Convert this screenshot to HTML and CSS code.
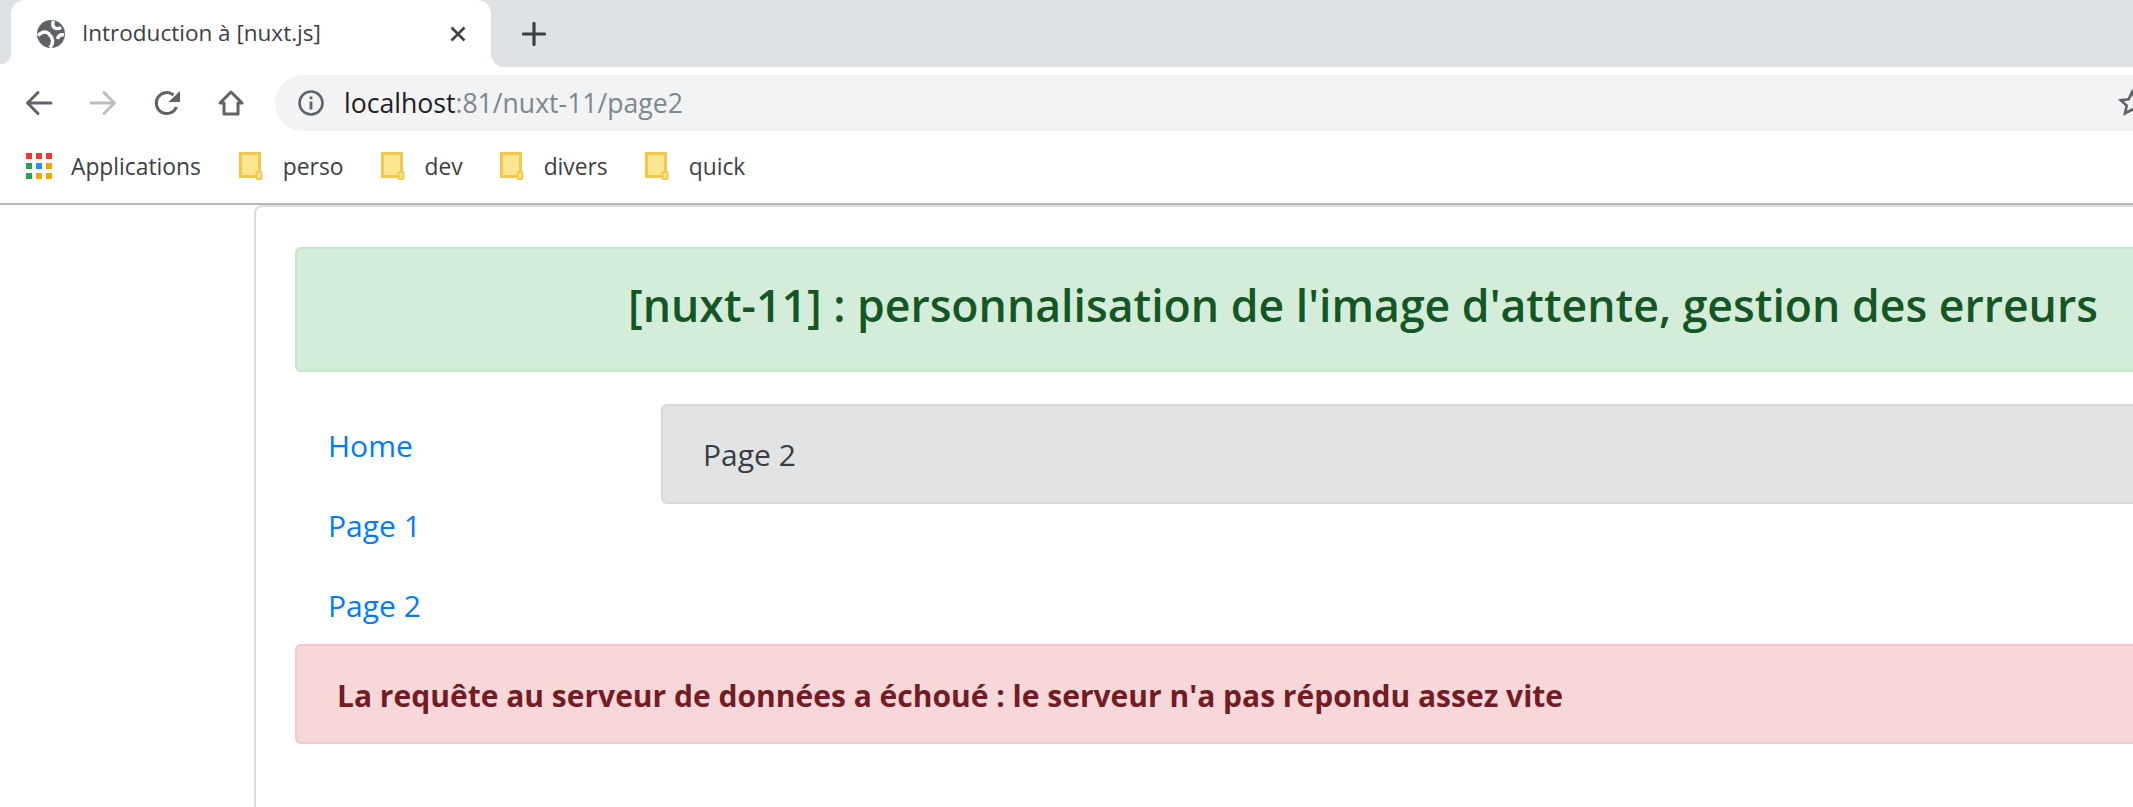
FILE: index.html
```html
<!DOCTYPE html>
<html lang="fr">
<head>
<meta charset="utf-8">
<title>Introduction à [nuxt.js]</title>
<link rel="stylesheet" href="styles.css">
</head>
<body>
<header class="chrome">
  <div class="tabstrip">
    <div class="tab">
      <svg class="favicon" viewBox="0 0 28 28"><circle cx="14" cy="14" r="14" fill="#5f6368"/><path d="M1 15.500Q7 9.500 11.500 13.500Q15 17 15.500 20Q16 24 13 27.500M16.500 1Q14.500 6 18 8Q21 9.500 24 7.500M27 15Q22 14 20.500 19" stroke="#fff" stroke-width="3.400" fill="none"/></svg>
      <span class="tab-title">Introduction à [nuxt.js]</span>
      <svg class="tab-close" viewBox="0 0 16 16"><path d="M1.500 1.500l13 13M14.500 1.500l-13 13" stroke="#3c4043" stroke-width="2.600" fill="none"/></svg>
    </div>
    <svg class="new-tab" viewBox="0 0 24 24"><path d="M12 1.500v21M1.500 12h21" stroke="#3c4043" stroke-width="3.200" fill="none" stroke-linecap="round"/></svg>
  </div>
  <div class="toolbar">
    <svg class="nav-icon" viewBox="0 0 28 28"><path d="M26 14H3M13 3.500L2.500 14 13 24.500" stroke="#5f6368" stroke-width="3" fill="none" stroke-linecap="round" stroke-linejoin="round"/></svg>
    <svg class="nav-icon" viewBox="0 0 28 28"><path d="M2 14h23M15 3.500L25.500 14 15 24.500" stroke="#bdbdbd" stroke-width="3" fill="none" stroke-linecap="round" stroke-linejoin="round"/></svg>
    <svg class="nav-icon" viewBox="0 0 28 28"><path d="M23.500 18A10.500 10.500 0 1 1 20.500 6" stroke="#5f6368" stroke-width="3" fill="none"/><path d="M27 2v11H15.500z" fill="#5f6368"/></svg>
    <svg class="nav-icon" viewBox="0 0 28 28"><path d="M14 3L3 14h4v11h14V14h4z" stroke="#5f6368" stroke-width="3" fill="none" stroke-linejoin="round"/></svg>
    <div class="omnibox">
      <svg class="info" viewBox="0 0 28 28"><circle cx="14" cy="14" r="11.500" stroke="#5f6368" stroke-width="2.600" fill="none"/><path d="M12.600 12.500h2.800v8h-2.800zM12.600 7.500h2.800v2.800h-2.800z" fill="#5f6368"/></svg>
      <span class="url"><span class="url-host">localhost</span>:81/nuxt-11/page2</span>
      <svg class="star" viewBox="0 0 28 28"><path d="M14 3l3.300 7.400 8 .8-6 5.400 1.700 7.900-7-4-7 4 1.700-7.900-6-5.400 8-.8z" stroke="#5f6368" stroke-width="2.600" fill="none" stroke-linejoin="miter"/></svg>
    </div>
  </div>
  <nav class="bookmarks">
    <span class="apps">
      <svg class="apps-grid" viewBox="0 0 26 26">
        <rect class="g-red" x="0" y="0" width="6" height="6"/><rect class="g-red" x="10" y="0" width="6" height="6"/><rect class="g-red" x="20" y="0" width="6" height="6"/>
        <rect class="g-green" x="0" y="10" width="6" height="6"/><rect class="g-blue" x="10" y="10" width="6" height="6"/><rect class="g-amber" x="20" y="10" width="6" height="6"/>
        <rect class="g-green" x="0" y="20" width="6" height="6"/><rect class="g-amber" x="10" y="20" width="6" height="6"/><rect class="g-amber" x="20" y="20" width="6" height="6"/>
      </svg>
      Applications
    </span>
    <span class="bookmark"><svg class="folder" viewBox="0 0 24 28"><path d="M1.500 1.500h19v23h-19z" fill="#fee690" stroke="#efc94f" stroke-width="3"/><rect x="17.500" y="20" width="5" height="7" rx="1" fill="#fee690" stroke="#efc94f" stroke-width="2"/></svg>perso</span>
    <span class="bookmark"><svg class="folder" viewBox="0 0 24 28"><path d="M1.500 1.500h19v23h-19z" fill="#fee690" stroke="#efc94f" stroke-width="3"/><rect x="17.500" y="20" width="5" height="7" rx="1" fill="#fee690" stroke="#efc94f" stroke-width="2"/></svg>dev</span>
    <span class="bookmark"><svg class="folder" viewBox="0 0 24 28"><path d="M1.500 1.500h19v23h-19z" fill="#fee690" stroke="#efc94f" stroke-width="3"/><rect x="17.500" y="20" width="5" height="7" rx="1" fill="#fee690" stroke="#efc94f" stroke-width="2"/></svg>divers</span>
    <span class="bookmark"><svg class="folder" viewBox="0 0 24 28"><path d="M1.500 1.500h19v23h-19z" fill="#fee690" stroke="#efc94f" stroke-width="3"/><rect x="17.500" y="20" width="5" height="7" rx="1" fill="#fee690" stroke="#efc94f" stroke-width="2"/></svg>quick</span>
  </nav>
</header>
<main class="viewport">
  <div class="frame">
    <div class="banner"><h1>[nuxt-11] : personnalisation de l'image d'attente, gestion des erreurs</h1></div>
    <div class="content-row">
      <ul class="menu">
        <li><a href="#">Home</a></li>
        <li><a href="#">Page 1</a></li>
        <li><a href="#">Page 2</a></li>
      </ul>
      <div class="panel">Page 2</div>
    </div>
    <div class="error">La requête au serveur de données a échoué : le serveur n'a pas répondu assez vite</div>
  </div>
</main>
</body>
</html>
```
FILE: styles.css
```css
* { box-sizing: border-box; }
html, body { margin: 0; height: 100%; }
body {
  width: 2133px;
  height: 807px;
  overflow: hidden;
  background: #fff;
  font-family: "Open Sans", "Noto Sans", sans-serif;
  display: flex;
  flex-direction: column;
}
.chrome { flex: none; border-bottom: 2px solid #b9b9b9; }
.tabstrip {
  height: 67px;
  background: #dee1e6;
  display: flex;
  align-items: center;
  padding-left: 11px;
}
.tab {
  position: relative;
  width: 480px;
  height: 67px;
  background: #fff;
  border-radius: 14px 14px 0 0;
  display: flex;
  align-items: center;
  padding: 0 25px 0 26px;
}
.tab::before,
.tab::after {
  content: "";
  position: absolute;
  bottom: 0;
  width: 14px;
  height: 14px;
}
.tab::before {
  right: 100%;
  width: 11px;
  background: radial-gradient(circle at 0 0, #dee1e6 11px, #fff 11.500px);
}
.tab::after {
  left: 100%;
  background: radial-gradient(circle at 100% 0, #dee1e6 14px, #fff 14.500px);
}
.favicon { width: 28px; height: 28px; flex: none; }
.tab-title {
  margin: 0 0 2px 17px;
  font-size: 22.500px;
  color: #3c4043;
  flex: 1;
  white-space: nowrap;
}
.tab-close { width: 16px; height: 16px; flex: none; }
.new-tab { width: 24px; height: 24px; margin-left: 31px; flex: none; }
.toolbar {
  height: 64px;
  display: flex;
  align-items: center;
  padding-left: 25px;
  padding-top: 8px;
}
.nav-icon { width: 28px; height: 28px; flex: none; margin-right: 36px; }
.nav-icon:nth-child(4) { margin-right: 30px; }
.omnibox {
  flex: 1;
  height: 56px;
  background: #f1f3f4;
  border-radius: 28px 0 0 28px;
  display: flex;
  align-items: center;
  padding-left: 22px;
  min-width: 0;
}
.info { width: 28px; height: 28px; flex: none; }
.url { margin-left: 19px; font-size: 26.600px; color: #80868b; flex: 1; white-space: nowrap; }
.url-host { color: #202124; }
.star { width: 28px; height: 28px; flex: none; margin-right: -13px; }
.bookmarks {
  height: 72px;
  display: flex;
  align-items: center;
  padding: 0 0 2px 26px;
  font-size: 22.800px;
  color: #3c4043;
  white-space: nowrap;
}
.apps, .bookmark { display: flex; align-items: center; }
.apps-grid { width: 26px; height: 26px; margin-right: 19px; }
.g-red { fill: #ef3a33; }
.g-green { fill: #2f9e55; }
.g-blue { fill: #2a8cf0; }
.g-amber { fill: #f2a600; }
.folder { width: 24px; height: 28px; margin-right: 20px; }
.apps { margin-right: 38px; }
.bookmark { margin-right: 37px; }
.viewport { flex: 1; min-height: 0; padding-left: 254px; }
.frame {
  height: 100%;
  border-left: 2px solid #dcdcdc;
  border-top: 2px solid #dcdcdc;
  border-top-left-radius: 8px;
  padding: 40px 0 0 39px;
}
.banner {
  height: 125px;
  background: #d4edda;
  border: 2px solid #c3e6cb;
  border-right: 0;
  border-radius: 6px 0 0 6px;
  display: flex;
  align-items: center;
  padding: 0 0 10px 331px;
}
.banner h1 {
  margin: 0;
  font-size: 44.600px;
  font-weight: 600;
  color: #155724;
  white-space: nowrap;
}
.content-row { display: flex; margin-top: 32px; }
.menu {
  list-style: none;
  margin: 0;
  padding: 0 0 0 33px;
  width: 366px;
  font-size: 30px;
  flex: none;
}
.menu li { height: 80px; padding-top: 20px; line-height: 44px; }
.menu a { color: #007bff; text-decoration: none; }
.panel {
  flex: 1;
  height: 100px;
  background: #e2e3e5;
  border: 2px solid #d6d8db;
  border-right: 0;
  border-radius: 6px 0 0 6px;
  padding-left: 40px;
  display: flex;
  align-items: center;
  font-size: 30px;
  color: #383d41;
}
.error {
  height: 100px;
  background: #f8d7da;
  border: 2px solid #f5c6cb;
  border-right: 0;
  border-radius: 6px 0 0 6px;
  padding: 2px 0 0 40px;
  display: flex;
  align-items: center;
  font-size: 30px;
  font-weight: 700;
  color: #721c24;
  white-space: nowrap;
}
```
